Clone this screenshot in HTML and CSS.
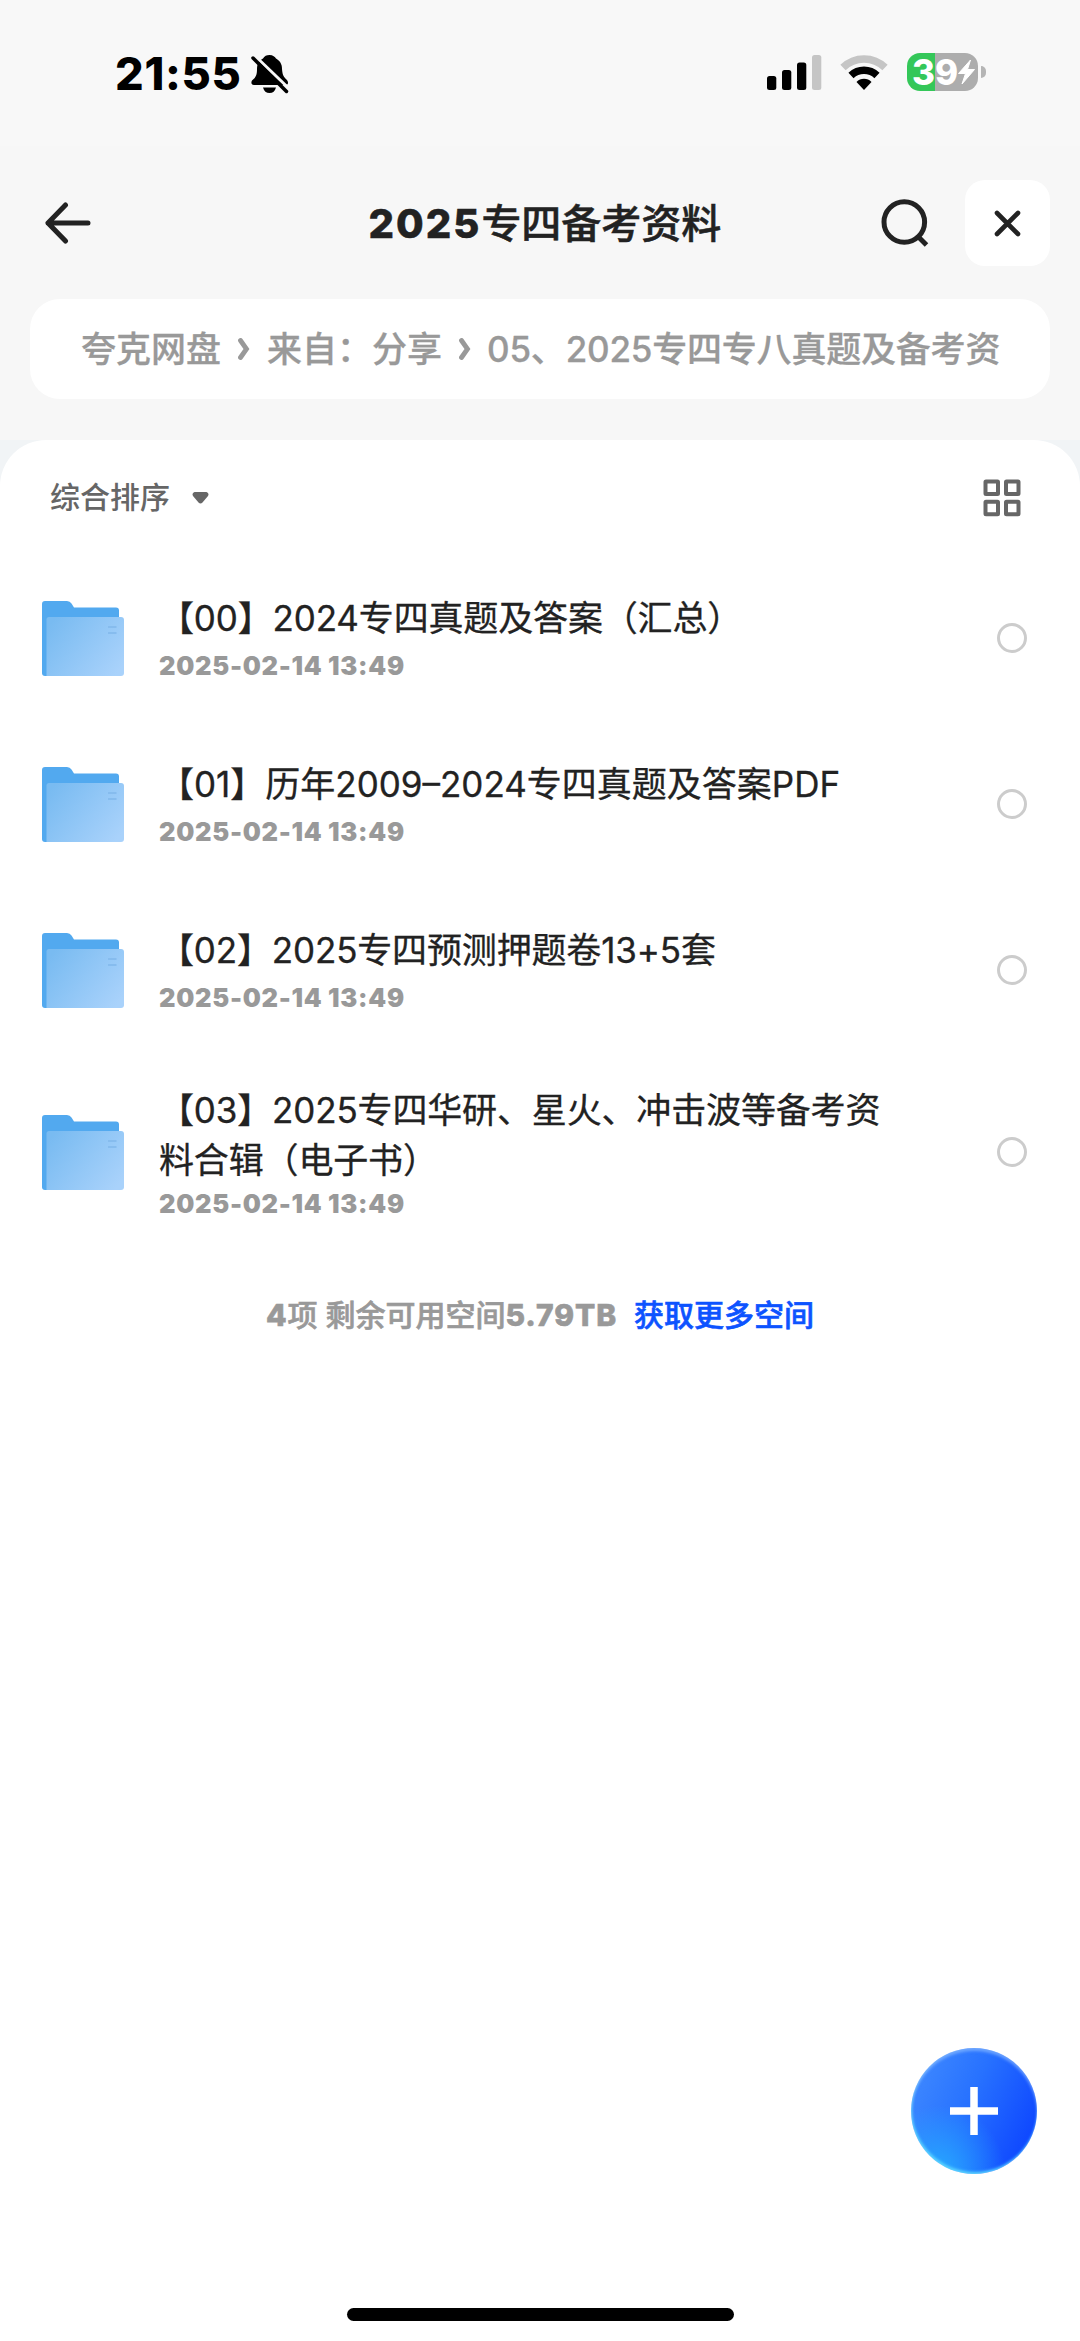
FILE: index.html
```html
<!DOCTYPE html>
<html lang="zh-CN">
<head>
  <meta charset="UTF-8">
  <meta name="viewport" content="width=device-width, initial-scale=1.0">
  <title>2025专四备考资料</title>
  <link rel="stylesheet" href="styles.css">
</head>
<body>
  <!-- shared folder icon -->
  <svg width="0" height="0" class="defs">
    <defs>
      <linearGradient id="folderFront" x1="0" y1="0.2" x2="1" y2="0.8">
        <stop offset="0" stop-color="#79bbf1"/>
        <stop offset="1" stop-color="#a9d2fb"/>
      </linearGradient>
      <symbol id="folder" viewBox="0 0 82 75">
        <path d="M3 0H25Q28 0 29.500 2.500L32 6.500H74Q77 6.500 77 9.500V72H3Q0 72 0 72V3Q0 0 3 0Z" fill="#52a9ef"/>
        <path d="M0 60H8V75H3Q0 75 0 72Z" fill="#52a9ef"/>
        <path d="M7 16H79Q82 16 82 19V72Q82 75 79 75H4.500V18.500Q4.500 16 7 16Z" fill="url(#folderFront)"/>
        <path d="M66 26H74.500M66 32H74.500" stroke="#86bcee" stroke-width="2"/>
      </symbol>
    </defs>
  </svg>

  <div class="screen">
    <div class="status-bar">
      <div class="status-left">
        <span class="time">21:55</span>
        <svg class="bell" width="38" height="40" viewBox="0 0 38 40">
          <path d="M18.500 1C22 1 24 3 25 4.500C29 7 31 10 31 15C31.500 22 33 23 36 26C38 29 37 31 34 31H3C0 31 0 28 1 26.500C5 23 6 21 6 15C6 9 9 6 12 4.500C13.500 2 15.500 1 18.500 1Z"/>
          <path d="M12 33.500H25Q23.500 39 18.500 39Q13.500 39 12 33.500Z"/>
          <path d="M2.500 0.500L38 34.500" stroke="#f8f8f8" stroke-width="3"/>
          <path d="M2 4L35.500 37.500" stroke="#000" stroke-width="3.500" stroke-linecap="round"/>
        </svg>
      </div>
      <div class="status-right">
        <svg class="signal" width="55" height="36" viewBox="0 0 55 36">
          <rect x="0" y="21" width="9.300" height="14" rx="2.500"/>
          <rect x="15" y="15" width="9.300" height="20" rx="2.500"/>
          <rect x="30" y="7.500" width="9.300" height="27.500" rx="2.500"/>
          <rect x="45" y="0" width="9.300" height="35" rx="2.500" fill="#c5c5c5"/>
        </svg>
        <svg class="wifi" width="48" height="36" viewBox="0 0 48 36">
          <path d="M3 12.500A30 30 0 0 1 45 12.500" fill="none" stroke="#c5c5c5" stroke-width="7.500"/>
          <path d="M11 20.500A19 19 0 0 1 37 20.500" fill="none" stroke="#000" stroke-width="7.500"/>
          <path d="M16.500 27A10.500 10.500 0 0 1 31.500 27L24 35Z"/>
        </svg>
        <div class="battery">
          <span class="battery-level">39</span>
          <svg width="17" height="26" viewBox="0 0 17 26">
            <path d="M12.500 1L0.500 14.500H7.500L4 25L16.500 10.500H9.500Z" fill="#fff" stroke="#fff" stroke-linejoin="round"/>
          </svg>
        </div>
        <i class="battery-cap"></i>
      </div>
    </div>

    <div class="nav">
      <svg class="back" width="46" height="42" viewBox="0 0 46 42">
        <path d="M43 21H3M20.500 3L3 21L20.500 39" fill="none" stroke="#222" stroke-width="5" stroke-linecap="round" stroke-linejoin="round"/>
      </svg>
      <h1 class="title"><span class="num">2025</span>专四备考资料</h1>
      <div class="nav-actions">
        <svg width="48" height="48" viewBox="0 0 48 48">
          <circle cx="23.300" cy="23" r="20.300" fill="none" stroke="#222" stroke-width="5"/>
          <path d="M38 38.500L45.500 46" stroke="#222" stroke-width="5"/>
        </svg>
        <div class="close">
          <svg width="27" height="27" viewBox="0 0 27 27">
            <path d="M3 3L24 24M24 3L3 24" stroke="#222" stroke-width="4.600" stroke-linecap="round"/>
          </svg>
        </div>
      </div>
    </div>

    <div class="crumbs">
      <span>夸克网盘</span>
      <svg class="chev" width="12" height="22" viewBox="0 0 12 22"><path d="M2.500 2.500L8.500 11L2.500 19.500" fill="none" stroke="#999" stroke-width="4.800" stroke-linecap="round"/></svg>
      <span>来自：分享</span>
      <svg class="chev" width="12" height="22" viewBox="0 0 12 22"><path d="M2.500 2.500L8.500 11L2.500 19.500" fill="none" stroke="#999" stroke-width="4.800" stroke-linecap="round"/></svg>
      <span class="current">05、2025专四专八真题及备考资</span>
    </div>

    <div class="sheet-wrap">
      <div class="sheet">
        <div class="toolbar">
          <div class="sort">
            <span>综合排序</span>
            <svg width="17" height="12" viewBox="0 0 17 12"><path d="M2.500 0H14.500Q17.500 1 16 4L10.500 10.500Q8.500 12.500 6.500 10.500L1 4Q-0.500 1 2.500 0Z" fill="#666"/></svg>
          </div>
          <svg class="grid" width="38" height="38" viewBox="0 0 38 38">
            <g fill="none" stroke="#666" stroke-width="4">
              <rect x="2.500" y="2.500" width="12.500" height="12.500" rx="0.500"/>
              <rect x="23" y="2.500" width="12.500" height="12.500" rx="0.500"/>
              <rect x="2.500" y="22.700" width="12.500" height="12.500" rx="0.500"/>
              <rect x="23" y="22.700" width="12.500" height="12.500" rx="0.500"/>
            </g>
          </svg>
        </div>

        <div class="list">
          <div class="row">
            <svg class="folder"><use href="#folder"/></svg>
            <div class="info">
              <div class="name">【00】2024专四真题及答案（汇总）</div>
              <div class="date">2025-02-14 13:49</div>
            </div>
            <i class="check"></i>
          </div>
          <div class="row">
            <svg class="folder"><use href="#folder"/></svg>
            <div class="info">
              <div class="name wide">【01】历年2009–2024专四真题及答案PDF</div>
              <div class="date">2025-02-14 13:49</div>
            </div>
            <i class="check"></i>
          </div>
          <div class="row">
            <svg class="folder"><use href="#folder"/></svg>
            <div class="info">
              <div class="name">【02】2025专四预测押题卷13+5套</div>
              <div class="date">2025-02-14 13:49</div>
            </div>
            <i class="check"></i>
          </div>
          <div class="row tall">
            <svg class="folder"><use href="#folder"/></svg>
            <div class="info">
              <div class="name">【03】2025专四华研、星火、冲击波等备考资<br>料合辑（电子书）</div>
              <div class="date">2025-02-14 13:49</div>
            </div>
            <i class="check"></i>
          </div>
        </div>

        <div class="summary">
          <span><b>4</b>项 剩余可用空间<b>5.79TB</b></span>
          <a class="more">获取更多空间</a>
        </div>
      </div>
    </div>

    <div class="fab">
      <svg width="48" height="48" viewBox="0 0 48 48">
        <path d="M24 0V48M0 24H48" stroke="#fff" stroke-width="7.500"/>
      </svg>
    </div>
    <div class="home-indicator"></div>
  </div>
</body>
</html>
```
FILE: styles.css
```css
* { box-sizing: border-box; }
body { margin: 0; background: #fff; font-family: Inter, "Noto Sans CJK SC", sans-serif; color: #222; }
svg { display: block; flex: none; }
.defs { position: absolute; }
.screen { position: relative; display: flex; flex-direction: column; width: 1080px; height: 2341px; background: #f7f7f7; overflow: hidden; white-space: nowrap; }

/* status bar */
.status-bar { display: flex; justify-content: space-between; height: 146px; padding: 53px 94px 0 115px; background: #f8f8f8; }
.status-left, .status-right { display: flex; align-items: flex-start; }
.time { font-size: 45px; font-weight: 800; line-height: 42px; letter-spacing: .7px; color: #000; width: 136px; }
.bell { margin-top: 1px; }
.signal { margin-top: 2px; }
.wifi { margin: 2px 0 0 18px; }
.battery { display: flex; align-items: center; width: 71px; height: 38px; margin-left: 19px; padding-left: 5px; border-radius: 13px; background: linear-gradient(90deg, #34c759 28px, #adadad 28px); }
.battery-level { width: 46px; font-size: 35px; font-weight: 800; line-height: 38px; color: #fff; }
.battery-cap { width: 5px; height: 12px; margin: 13px 0 0 3px; border-radius: 0 5px 5px 0; background: #b5b5b5; }

/* title row */
.nav { display: flex; align-items: center; justify-content: space-between; height: 153px; padding: 0 30px 0 45px; }
.back { margin: 1px 118px 0 0; }
.title { margin: 3px 0 0; font-size: 40px; font-weight: 500; line-height: 60px; -webkit-text-stroke: .5px; }
.title .num { font-weight: 800; letter-spacing: 2px; }
.nav-actions { display: flex; align-items: center; gap: 36px; margin-top: 1px; }
.close { display: flex; align-items: center; justify-content: center; width: 85px; height: 86px; border-radius: 20px; background: #fff; }

.crumbs { display: flex; align-items: center; height: 100px; margin: 0 30px; padding-left: 51px; border-radius: 30px; background: #fff; color: #999; font-size: 35px; font-weight: 500; }
.crumbs span { margin-top: -5px; -webkit-text-stroke: .3px; }
.crumbs .current { margin-left: -1px; letter-spacing: -.2px; }
.chev { margin: 0 17px; }

/* file list */
.sheet-wrap { flex: 1; margin-top: 41px; background: linear-gradient(#f1f4f6, #f1f4f6 60px, #fff 60px); }
.sheet { height: 100%; border-radius: 46px 46px 0 0; background: #fff; }
.toolbar { display: flex; align-items: center; justify-content: space-between; height: 115px; padding: 0 59px 0 50px; }
.sort { display: flex; align-items: center; gap: 22px; font-size: 30px; font-weight: 500; color: #666; }
.sort span { margin-top: -5px; }

.row { display: flex; align-items: center; height: 166px; padding: 0 53px 0 42px; }
.folder { width: 82px; height: 75px; margin-top: 1px; }
.info { flex: 1; margin: -2px 0 0 35px; }
.name { font-size: 35px; line-height: 50px; letter-spacing: -.15px; -webkit-text-stroke: .3px; }
.wide { letter-spacing: 0; }
.date { margin-top: 8px; font-size: 25.5px; font-weight: 900; line-height: 30px; letter-spacing: .7px; color: #999; }
.check { width: 30px; height: 30px; border: 3px solid #ccc; border-radius: 50%; }
.tall { height: 198px; }
.tall .info { margin-top: 0; }
.tall .date { margin-top: 4px; }

.summary { display: flex; justify-content: center; gap: 17px; margin-top: 42px; font-size: 30px; font-weight: 500; line-height: 44px; color: #999; -webkit-text-stroke: .6px; }
.summary b { font-weight: 800; letter-spacing: .9px; }
.more { color: #0d53ff; }

.fab { position: absolute; left: 911px; top: 2048px; display: flex; align-items: center; justify-content: center; width: 126px; height: 126px; border-radius: 50%; background: radial-gradient(circle at 22% 98%, #27a8ff 0, rgba(39, 168, 255, 0) 42%), linear-gradient(115deg, #3d87ff 10%, #2771ff 45%, #104aff 85%); box-shadow: inset 0 3px 3px rgba(150, 195, 255, .6), inset 1px -2px 3px #5cd5ff; }
.home-indicator { position: absolute; left: 347px; top: 2308px; width: 387px; height: 13px; border-radius: 7px; background: #000; }
```
